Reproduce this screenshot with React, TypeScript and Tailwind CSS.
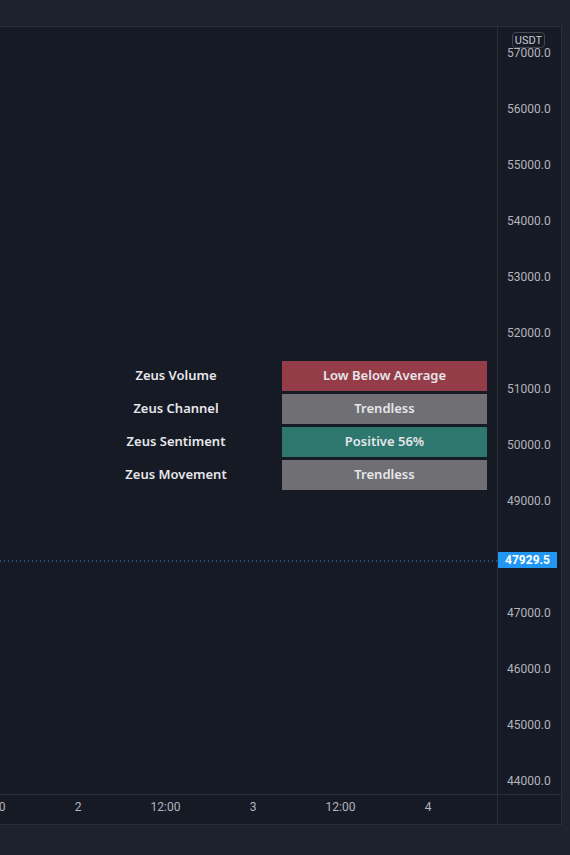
const prices = [
  "57000.0",
  "56000.0",
  "55000.0",
  "54000.0",
  "53000.0",
  "52000.0",
  "51000.0",
  "50000.0",
  "49000.0",
  "48000.0",
  "47000.0",
  "46000.0",
  "45000.0",
  "44000.0",
];

const times = [
  { label: "12:00", x: -9.5 },
  { label: "2", x: 78 },
  { label: "12:00", x: 165.5 },
  { label: "3", x: 253 },
  { label: "12:00", x: 340.5 },
  { label: "4", x: 428 },
];

const rows = [
  { label: "Zeus Volume", value: "Low Below Average", tone: "bg-[#943d48]" },
  { label: "Zeus Channel", value: "Trendless", tone: "bg-[#707074]" },
  { label: "Zeus Sentiment", value: "Positive 56%", tone: "bg-[#2e776f]" },
  { label: "Zeus Movement", value: "Trendless", tone: "bg-[#707074]" },
];

export default function App() {
  return (
    <div className="flex h-[855px] w-[570px] flex-col bg-[#1e222d] font-['Roboto',sans-serif]">
      <div className="h-[26px] shrink-0" />

      <div className="flex h-[799px] w-[562px] shrink-0 flex-col border-y border-r border-[#2a2e39] bg-[#161a25]">
        <div className="flex min-h-0 flex-1">
          {/* chart pane */}
          <div className="relative flex-1">
            <svg className="absolute left-0 top-[533px] h-[2px] w-full" preserveAspectRatio="none">
              <line x1="0" y1="1" x2="100%" y2="1" stroke="#2196f3" strokeWidth="1" strokeDasharray="1 3" />
            </svg>

            <div className="absolute left-[70px] top-[334px] grid grid-cols-[212px_205px] gap-y-[3px] font-['Noto_Sans',sans-serif] text-[13px] font-semibold text-[#e6e6ea]">
              {rows.map((r) => (
                <div key={r.label} className="contents">
                  <div className="flex h-[30px] items-center justify-center">{r.label}</div>
                  <div className={`flex h-[30px] items-center justify-center ${r.tone}`}>
                    {r.value}
                  </div>
                </div>
              ))}
            </div>
          </div>

          {/* price scale */}
          <div className="relative w-[64px] shrink-0 border-l border-[#2a2e39] text-[12px] text-[#b2b5be]">
            {prices.map((p, i) => (
              <div
                key={p}
                className="absolute left-[9px] flex h-[14px] items-center leading-none"
                style={{ top: 19 + i * 56 }}
              >
                {p}
              </div>
            ))}

            <div className="absolute left-[14px] top-[5px] flex h-[16px] w-[33px] items-center justify-center rounded-[4px] border border-[#434651] bg-[#161a25] text-[11px] leading-none text-[#c8cbd3]">
              USDT
            </div>

            <div className="absolute left-0 top-[525px] flex h-[16px] w-[59px] items-center justify-center bg-[#2196f3] text-[12px] font-bold leading-none text-white">
              47929.5
            </div>
          </div>
        </div>

        {/* time scale */}
        <div className="flex h-[30px] shrink-0 border-t border-[#2a2e39] text-[12px] text-[#b2b5be]">
          <div className="relative flex-1 overflow-hidden">
            {times.map((t, i) => (
              <div
                key={i}
                className="absolute top-[5px] flex h-[14px] w-[40px] -translate-x-1/2 items-center justify-center leading-none"
                style={{ left: t.x }}
              >
                {t.label}
              </div>
            ))}
          </div>
          <div className="w-[64px] shrink-0 border-l border-[#2a2e39]" />
        </div>
      </div>
    </div>
  );
}
